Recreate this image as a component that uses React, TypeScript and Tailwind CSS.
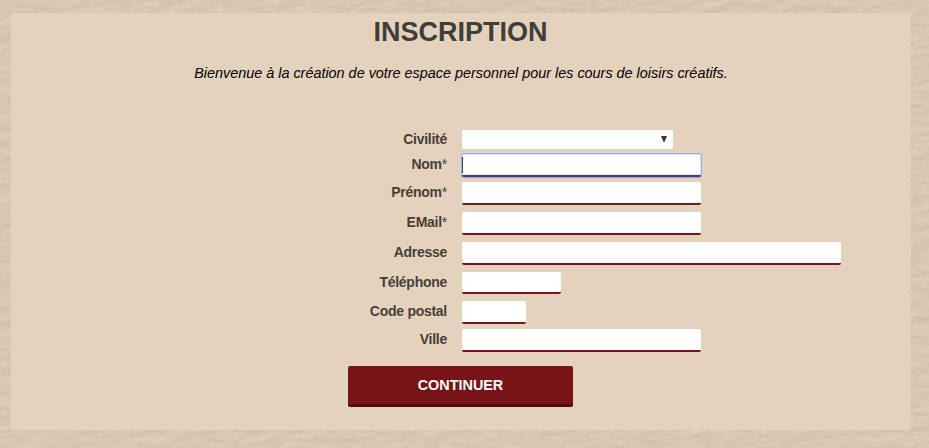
type Field = {
  label: string;
  required?: boolean;
  row: string;
  input: string;
};

const fields: Field[] = [
  { label: "Prénom", required: true, row: "mt-[5px]", input: "h-[23px] w-[239px]" },
  { label: "EMail", required: true, row: "mt-[7px]", input: "h-[23px] w-[239px]" },
  { label: "Adresse", row: "mt-[7px]", input: "h-[23px] w-[379px]" },
  { label: "Téléphone", row: "mt-[7px]", input: "h-[22px] w-[99px]" },
  { label: "Code postal", row: "mt-[7px]", input: "h-[23px] w-[64px]" },
  { label: "Ville", row: "mt-[5px]", input: "h-[23px] w-[239px]" },
];

function Label({ text, required, leading = "leading-5" }: { text: string; required?: boolean; leading?: string }) {
  return (
    <label
      className={`w-[436px] shrink-0 text-right text-[14px] font-bold tracking-[-0.27px] text-[#463f37] ${leading}`}
    >
      {text}
      {required && <span className="font-normal">*</span>}
    </label>
  );
}

function LeatherTexture() {
  return (
    <svg className="absolute inset-0 h-full w-full" aria-hidden="true">
      <filter id="leather" x="0" y="0" width="100%" height="100%" colorInterpolationFilters="sRGB">
        <feTurbulence type="fractalNoise" baseFrequency="0.05 0.1" numOctaves="3" seed="8" result="noise" />
        <feDiffuseLighting in="noise" surfaceScale="0.35" diffuseConstant="1.13" lightingColor="#dac7b3">
          <feDistantLight azimuth="250" elevation="62" />
        </feDiffuseLighting>
      </filter>
      <rect width="100%" height="100%" filter="url(#leather)" />
    </svg>
  );
}

export default function App() {
  return (
    <div className="relative h-[448px] w-[929px] overflow-hidden bg-[#dac7b1] pt-[13px] pl-[11px] font-['Liberation_Sans',Arial,sans-serif]">
      <LeatherTexture />
      <main className="relative h-[417px] w-[900px] bg-[#e4d2bd]">
        <h1 className="pt-[3px] pr-px text-center text-[27px] leading-8 font-bold text-[#403d3a]">INSCRIPTION</h1>
        <p className="mt-[15px] text-center text-[14.4px] leading-5 whitespace-nowrap text-black italic">
          Bienvenue à la création de votre espace personnel pour les cours de loisirs créatifs.
        </p>
        <form className="mt-[47px]">
          <div className="flex h-[19px] items-start gap-[15px]">
            <Label text="Civilité" leading="leading-[18px]" />
            <div className="flex h-[19px] w-[211px] items-center justify-end rounded-[2px] bg-white pr-[6px]">
              <svg className="mb-[2px] h-[6px] w-[6px]" viewBox="0 0 6 6" fill="#383838">
                <path d="M0 0H6L3.5 6H2.5Z" />
              </svg>
            </div>
          </div>
          <div className="mt-[5px] flex items-start gap-[15px]">
            <Label text="Nom" required />
            <div className="flex h-[23px] w-[239px] items-center rounded-[2px] border-b-2 border-[#5c3561] bg-white shadow-[0_0_0_1px_#94b0e4,inset_0_0_0_1px_#d3e2f8]">
              <span className="h-[16px] w-px bg-[#344b78]" />
            </div>
          </div>
          {fields.map((field) => (
            <div key={field.label} className={`flex items-start gap-[15px] ${field.row}`}>
              <Label text={field.label} required={field.required} />
              <input
                aria-label={field.label}
                className={`${field.input} rounded-[2px] border-b-2 border-[#761419] bg-white outline-none`}
              />
            </div>
          ))}
          <button
            type="button"
            className="mt-[14px] ml-[337px] block h-[41px] w-[225px] rounded-[2px] border-b-[3px] border-[#500c10] bg-[#781418] text-[14.4px] leading-5 font-bold text-white"
          >
            CONTINUER
          </button>
        </form>
      </main>
    </div>
  );
}
